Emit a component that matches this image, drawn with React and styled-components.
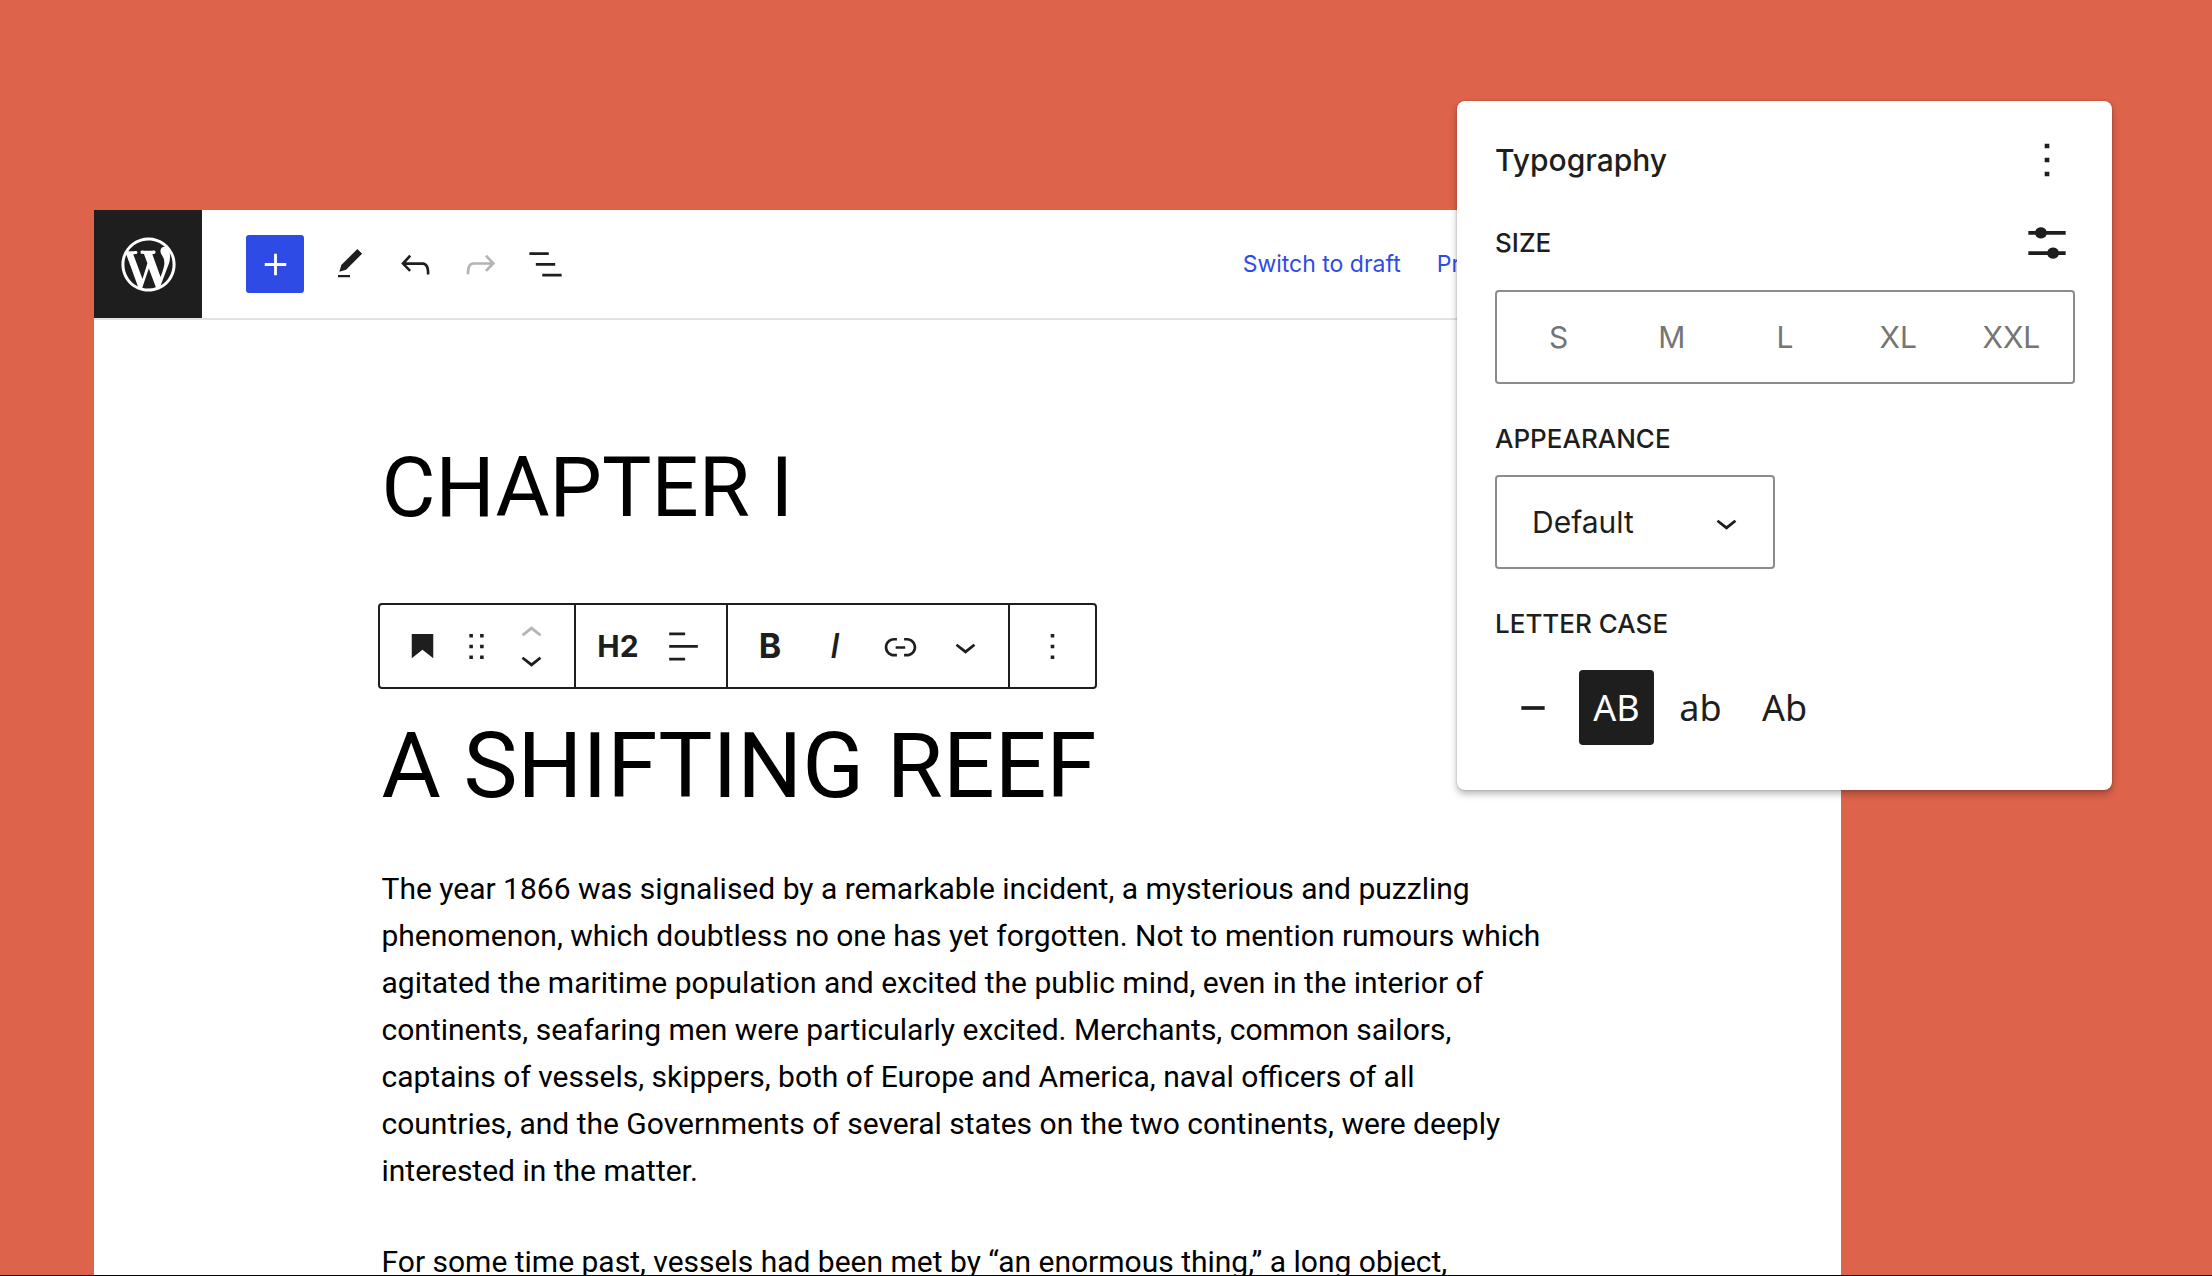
import React, { useState } from 'react';
import styled, { createGlobalStyle } from 'styled-components';

const ink = '#1e1e1e';
const blue = '#2f4be6';

const GlobalStyle = createGlobalStyle`
  *, *::before, *::after { box-sizing: border-box; }
  body { margin: 0; font-family: Inter, "Liberation Sans", sans-serif; color: ${ink}; }
  button, select { font: inherit; color: inherit; }
  h1, h2, p { margin: 0; }
`;

const Page = styled.div`
  position: relative;
  display: flex;
  height: 100vh;
  padding: 210px 371px 0 94px;
  overflow: hidden;
  background: #dd634a;
  border-bottom: 1px solid #000;
`;

const Editor = styled.main`
  flex: 1;
  min-width: 0;
  background: #fff;
`;

const Header = styled.header`
  display: flex;
  align-items: stretch;
  justify-content: space-between;
  height: 110px;
  border-bottom: 2px solid #e2e2e2;
`;

const HeaderStart = styled.div`
  display: flex;
  align-items: center;
`;

const SiteLink = styled.a`
  display: grid;
  place-items: center;
  width: 108px;
  height: 108px;
  background: ${ink};
  color: #fff;
`;

const Tools = styled.div`
  display: flex;
  align-items: center;
  gap: 7px;
  padding-left: 44px;
`;

const ToolButton = styled.button`
  display: grid;
  place-items: center;
  width: 58px;
  height: 58px;
  margin-right: ${(p) => (p.$primary ? 10 : 0)}px;
  padding: 0;
  border: 0;
  border-radius: 3px;
  background: ${(p) => (p.$primary ? blue : 'transparent')};
  color: ${(p) => (p.$primary ? '#fff' : ink)};
  &:disabled { color: #b4b4b4; }
`;

const HeaderLinks = styled.nav`
  display: flex;
  align-items: center;
  gap: 36px;
  padding-right: 318px;
`;

const HeaderLink = styled.a`
  font-size: 23px;
  line-height: 32px;
  color: ${blue};
  text-decoration: none;
  white-space: nowrap;
`;

const Article = styled.article`
  max-width: 1172px;
  margin: 0 auto;
  padding-top: 118px;
  color: #000;
  font-family: Roboto, "Liberation Sans", sans-serif;
`;

const Title = styled.h1`
  font-size: 83px;
  font-weight: 400;
  line-height: 100px;
  white-space: nowrap;
`;

const Subtitle = styled.h2`
  margin-top: 22px;
  font-size: 91px;
  font-weight: 400;
  line-height: 110px;
  white-space: nowrap;
`;

const Prose = styled.div`
  display: grid;
  gap: 44px;
  max-width: 1168px;
  margin-top: 44px;
  font-size: 30px;
  line-height: 47px;
`;

const BlockToolbar = styled.div`
  display: flex;
  width: max-content;
  height: 86px;
  margin: 65px 0 0 -4px;
  border: 2px solid ${ink};
  border-radius: 4px;
  color: ${ink};
  font-family: Inter, "Liberation Sans", sans-serif;
`;

const ToolbarGroup = styled.div`
  display: flex;
  align-items: center;
  padding: 0 10px;
  & + & { border-left: 2px solid ${ink}; }
`;

const BlockButton = styled.button`
  display: grid;
  place-items: center;
  width: ${(p) => (p.$narrow ? 44 : 65)}px;
  height: 65px;
  padding: 0;
  border: 0;
  background: none;
  font-size: ${(p) => (p.$large ? 34 : 30)}px;
  font-weight: ${(p) => (p.$italic ? 500 : 700)};
  font-style: ${(p) => (p.$italic ? 'italic' : 'normal')};
  line-height: 1;
`;

const Mover = styled.div`
  display: grid;
  grid-template-rows: 26px 26px;
  width: 65px;
`;

const MoverButton = styled.button`
  display: grid;
  place-content: center;
  padding: 0;
  border: 0;
  background: none;
  &:disabled { color: #b4b4b4; }
`;

const Panel = styled.aside`
  position: absolute;
  top: 101px;
  right: 100px;
  width: 655px;
  padding: 31px 37px 45px 38px;
  border-radius: 8px;
  background: #fff;
  box-shadow: 0 0 2px rgba(0, 0, 0, 0.24), 0 4px 7px rgba(0, 0, 0, 0.28);
`;

const PanelRow = styled.div`
  display: flex;
  align-items: center;
  justify-content: space-between;
  height: 56px;
  margin-top: ${(p) => p.$top || 0}px;
`;

const PanelTitle = styled.h2`
  font-size: 30px;
  font-weight: 550;
  line-height: 36px;
`;

const IconButton = styled.button`
  display: grid;
  place-items: center;
  width: 56px;
  height: 56px;
  padding: 0;
  border: 0;
  background: none;
`;

const Caption = styled.span`
  font-size: 26px;
  font-weight: 550;
  line-height: 32px;
`;

const FieldGroup = styled.div`
  display: grid;
  gap: ${(p) => p.$gap}px;
  justify-items: start;
  margin-top: 39px;
`;

const SizePicker = styled.div`
  display: grid;
  grid-template-columns: repeat(5, 1fr);
  height: 94px;
  margin-top: 19px;
  padding: 0 5px;
  border: 2px solid #8c8c8c;
  border-radius: 4px;
`;

const SizeButton = styled.button`
  padding: 0;
  border: 0;
  background: none;
  font-size: 30px;
  color: #757575;
`;

const SelectBox = styled.div`
  display: grid;
  grid-template-columns: 280px;
  align-items: center;
  & > * { grid-area: 1 / 1; }
  & > svg { justify-self: end; margin-right: 27px; pointer-events: none; }
`;

const Select = styled.select`
  appearance: none;
  width: 100%;
  height: 94px;
  padding: 0 35px;
  border: 2px solid #8c8c8c;
  border-radius: 4px;
  background: #fff;
  font-size: 30px;
`;

const CaseList = styled.div`
  display: flex;
  gap: 9px;
`;

const CaseButton = styled.button`
  display: grid;
  place-items: center;
  width: 75px;
  height: 75px;
  padding: 0;
  border: 0;
  border-radius: 4px;
  background: ${(p) => (p.$active ? ink : 'transparent')};
  color: ${(p) => (p.$active ? '#fff' : ink)};
  font-family: "Noto Sans", sans-serif;
  font-size: 36px;
  font-weight: 450;
  line-height: 1;
`;

const paths = {
  wordpress:
    'M20 10c0-5.51-4.49-10-10-10C4.48 0 0 4.49 0 10c0 5.52 4.48 10 10 10 5.51 0 10-4.48 10-10zM7.78 15.37L4.37 6.22c.55-.02 1.17-.08 1.17-.08.5-.06.44-1.13-.06-1.11 0 0-1.45.11-2.37.11-.18 0-.37 0-.58-.01C4.12 2.69 6.87 1.11 10 1.11c2.33 0 4.45.87 6.05 2.34-.68-.11-1.65.39-1.65 1.58 0 .74.45 1.36.9 2.1.35.61.55 1.36.55 2.46 0 1.49-1.4 5-1.4 5l-3.03-8.37c.54-.02.82-.17.82-.17.5-.05.44-1.25-.06-1.22 0 0-1.44.12-2.38.12-.87 0-2.33-.12-2.33-.12-.5-.03-.56 1.2-.06 1.22l.92.08 1.26 3.41zM17.41 10c.24-.64.74-1.87.43-4.25.7 1.29 1.05 2.71 1.05 4.25 0 3.29-1.73 6.24-4.4 7.78.97-2.59 1.94-5.2 2.92-7.78zM6.1 18.09C3.12 16.65 1.11 13.53 1.11 10c0-1.3.23-2.48.72-3.59C3.25 10.3 4.67 14.2 6.1 18.09zm4.03-6.63l2.58 6.98c-.86.29-1.76.45-2.71.45-.79 0-1.57-.11-2.29-.33.81-2.38 1.62-4.74 2.42-7.1z',
  plus: 'M18 11.2h-5.2V6h-1.6v5.2H6v1.6h5.2V18h1.6v-5.2H18z',
  pencil: 'M20.1 5.1L16.9 2 6.2 12.7l-1.3 4.4 4.5-1.3L20.1 5.1zM4 20.8h8v-1.5H4v1.5z',
  undo: 'M18.3 11.7c-.6-.6-1.4-.9-2.3-.9H6.7l2.9-3.3-1.1-1-4.5 5L8.5 16l1-1-2.7-2.7H16c.5 0 .9.2 1.3.5 1 1 1 3.4 1 4.5v.3h1.5v-.2c0-1.5 0-4.3-1.5-5.7z',
  redo: 'M15.6 6.5l-1.1 1 2.9 3.3H8c-.9 0-1.7.3-2.3.9-1.4 1.5-1.4 4.2-1.4 5.6v.2h1.5v-.3c0-1.1 0-3.5 1-4.5.3-.3.7-.5 1.3-.5h9.2L14.5 15l1.1 1.1 4.6-4.6-4.6-5z',
  listView: 'M13.8 5.2H3v1.5h10.8V5.2zm-3.6 12v1.5H21v-1.5H10.2zm7.2-6H6.6v1.5h10.8v-1.5z',
  bookmark: 'M6 5v13.6l6-4.75 6 4.75V5H6z',
  drag: 'M8 7h2V5H8v2zm0 6h2v-2H8v2zm0 6h2v-2H8v2zm6-14v2h2V5h-2zm0 8h2v-2h-2v2zm0 6h2v-2h-2v2z',
  up: 'M6.5 12.4L12 8l5.5 4.4-.9 1.2L12 10l-4.5 3.6-1-1.2z',
  down: 'M17.5 11.6L12 16l-5.5-4.4.9-1.2L12 14l4.5-3.6 1 1.2z',
  align: 'M4 19.8h8.9v-1.5H4v1.5zm8.9-15.6H4v1.5h8.9V4.2zm-8.9 7v1.5h16v-1.5H4z',
  link: 'M15.6 7.2H14v1.5h1.6c2 0 3.7 1.7 3.7 3.7s-1.7 3.7-3.7 3.7H14v1.5h1.6c2.8 0 5.2-2.3 5.2-5.2 0-2.9-2.3-5.2-5.2-5.2zM4.7 12.4c0-2 1.7-3.7 3.7-3.7H10V7.2H8.4c-2.9 0-5.2 2.3-5.2 5.2 0 2.9 2.3 5.2 5.2 5.2H10v-1.5H8.4c-2 0-3.7-1.7-3.7-3.7zm4.6.9h5.3v-1.5H9.3v1.5z',
  more: 'M13 19h-2v-2h2v2zm0-6h-2v-2h2v2zm0-6h-2V5h2v2z',
  settings:
    'M4 6.9h3a2.6 2.6 0 0 1 4.8 0H20v1.6h-8.2a2.6 2.6 0 0 1-4.8 0H4zM4 15.5h8.2a2.6 2.6 0 0 1 4.8 0h3v1.6h-3a2.6 2.6 0 0 1-4.8 0H4z',
  dash: 'M7 11.2h10v1.6H7z',
};

function Icon({ name, size = 43, viewBox = '0 0 24 24' }) {
  return (
    <svg width={size} height={size} viewBox={viewBox} fill="currentColor" aria-hidden="true">
      <path d={paths[name]} />
    </svg>
  );
}

const sizes = ['S', 'M', 'L', 'XL', 'XXL'];

const letterCases = [
  { id: 'none', label: 'None' },
  { id: 'upper', label: 'Uppercase', sample: 'AB' },
  { id: 'lower', label: 'Lowercase', sample: 'ab' },
  { id: 'title', label: 'Capitalize', sample: 'Ab' },
];

function TypographyPanel() {
  const [letterCase, setLetterCase] = useState('upper');
  return (
    <Panel aria-label="Typography">
      <PanelRow>
        <PanelTitle>Typography</PanelTitle>
        <IconButton aria-label="Typography options">
          <Icon name="more" size={56} />
        </IconButton>
      </PanelRow>
      <PanelRow $top={27}>
        <Caption id="size-caption">SIZE</Caption>
        <IconButton aria-label="Set custom size">
          <Icon name="settings" size={56} />
        </IconButton>
      </PanelRow>
      <SizePicker role="group" aria-labelledby="size-caption">
        {sizes.map((s) => (
          <SizeButton key={s}>{s}</SizeButton>
        ))}
      </SizePicker>
      <FieldGroup $gap={20}>
        <Caption as="label" htmlFor="appearance">APPEARANCE</Caption>
        <SelectBox>
          <Select id="appearance" defaultValue="default">
            <option value="default">Default</option>
          </Select>
          <Icon name="down" />
        </SelectBox>
      </FieldGroup>
      <FieldGroup $gap={30}>
        <Caption id="case-caption">LETTER CASE</Caption>
        <CaseList role="group" aria-labelledby="case-caption">
          {letterCases.map(({ id, label, sample }) => (
            <CaseButton
              key={id}
              aria-label={label}
              aria-pressed={letterCase === id}
              $active={letterCase === id}
              onClick={() => setLetterCase(id)}
            >
              {sample || <Icon name="dash" size={56} />}
            </CaseButton>
          ))}
        </CaseList>
      </FieldGroup>
    </Panel>
  );
}

export default function App() {
  return (
    <>
      <GlobalStyle />
      <Page>
        <Editor>
          <Header>
            <HeaderStart>
              <SiteLink href="#" aria-label="Dashboard">
                <Icon name="wordpress" size={65} viewBox="-2 -2 24 24" />
              </SiteLink>
              <Tools>
                <ToolButton $primary aria-label="Add block"><Icon name="plus" /></ToolButton>
                <ToolButton aria-label="Tools"><Icon name="pencil" size={36} /></ToolButton>
                <ToolButton aria-label="Undo"><Icon name="undo" /></ToolButton>
                <ToolButton aria-label="Redo" disabled><Icon name="redo" /></ToolButton>
                <ToolButton aria-label="List view"><Icon name="listView" /></ToolButton>
              </Tools>
            </HeaderStart>
            <HeaderLinks>
              <HeaderLink href="#">Switch to draft</HeaderLink>
              <HeaderLink href="#">Preview</HeaderLink>
            </HeaderLinks>
          </Header>
          <Article>
            <Title>CHAPTER I</Title>
            <BlockToolbar role="toolbar" aria-label="Block tools">
              <ToolbarGroup>
                <BlockButton aria-label="Heading"><Icon name="bookmark" /></BlockButton>
                <BlockButton $narrow aria-label="Drag"><Icon name="drag" /></BlockButton>
                <Mover>
                  <MoverButton aria-label="Move up" disabled><Icon name="up" /></MoverButton>
                  <MoverButton aria-label="Move down"><Icon name="down" /></MoverButton>
                </Mover>
              </ToolbarGroup>
              <ToolbarGroup>
                <BlockButton aria-label="Heading level 2">H2</BlockButton>
                <BlockButton aria-label="Align text"><Icon name="align" /></BlockButton>
              </ToolbarGroup>
              <ToolbarGroup>
                <BlockButton $large aria-label="Bold">B</BlockButton>
                <BlockButton $large $italic aria-label="Italic">I</BlockButton>
                <BlockButton aria-label="Link"><Icon name="link" /></BlockButton>
                <BlockButton aria-label="More formatting"><Icon name="down" /></BlockButton>
              </ToolbarGroup>
              <ToolbarGroup>
                <BlockButton aria-label="Options"><Icon name="more" /></BlockButton>
              </ToolbarGroup>
            </BlockToolbar>
            <Subtitle>A SHIFTING REEF</Subtitle>
            <Prose>
              <p>
                The year 1866 was signalised by a remarkable incident, a mysterious and puzzling
                phenomenon, which doubtless no one has yet forgotten. Not to mention rumours which
                agitated the maritime population and excited the public mind, even in the interior of
                continents, seafaring men were particularly excited. Merchants, common sailors,
                captains of vessels, skippers, both of Europe and America, naval officers of all
                countries, and the Governments of several states on the two continents, were deeply
                interested in the matter.
              </p>
              <p>For some time past, vessels had been met by “an enormous thing,” a long object,</p>
            </Prose>
          </Article>
        </Editor>
        <TypographyPanel />
      </Page>
    </>
  );
}
